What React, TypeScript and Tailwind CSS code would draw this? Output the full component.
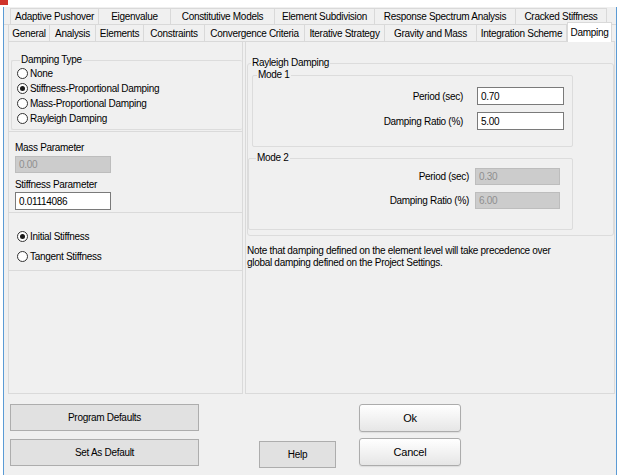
import React from "react";

const row1 = [
  ["Adaptive Pushover", 89],
  ["Eigenvalue", 73],
  ["Constitutive Models", 105],
  ["Element Subdivision", 101],
  ["Response Spectrum Analysis", 142],
  ["Cracked Stiffness", 92],
] as const;

const row2 = [
  ["General", 42],
  ["Analysis", 46],
  ["Elements", 48],
  ["Constraints", 61],
  ["Convergence Criteria", 100],
  ["Iterative Strategy", 80],
  ["Gravity and Mass", 92],
  ["Integration Scheme", 90],
] as const;

function Radio({ checked, label }: { checked?: boolean; label: string }) {
  return (
    <div className="flex items-center h-[15px]">
      <span className="w-[11px] h-[11px] rounded-full border border-[#333333] bg-white flex items-center justify-center shrink-0">
        {checked && <span className="w-[5px] h-[5px] rounded-full bg-[#1a1a1a]" />}
      </span>
      <span className="ml-[2px] leading-none">{label}</span>
    </div>
  );
}

function Field({ value, disabled, w }: { value: string; disabled?: boolean; w: string }) {
  return (
    <div
      className={
        disabled
          ? `${w} h-[17px] border border-[#bdbdbd] bg-[#cccccc] text-[#8f8f8f] flex items-center pl-[3px]`
          : `${w} h-[18px] border border-[#7a7a7a] bg-white text-black flex items-center pl-[3px]`
      }
    >
      {value}
    </div>
  );
}

export default function App() {
  return (
    <div className="w-[618px] h-[475px] bg-[#f0f0f0] flex flex-col overflow-hidden font-['Liberation_Sans',Arial,sans-serif] text-[10px] tracking-[-0.3px] text-black">
      {/* title strip */}
      <div className="h-[7px] bg-white flex shrink-0">
        <div className="w-[8px] h-[5px] bg-[#d0342c]" />
      </div>
      <div className="flex-1 flex min-h-0">
        <div className="w-[3px] bg-white" />
        <div className="w-[1px] bg-[#5b9bd5]" />
        <div className="flex-1 flex flex-col min-w-0">
          {/* tabs row 1 */}
          <div className="flex pl-[6px] mt-[1px] h-[16px]">
            {row1.map(([t, w]) => (
              <div
                key={t}
                style={{ width: w }}
                className="h-full border border-b-0 border-[#d9d9d9] -ml-px first:ml-0 bg-[#f0f0f0] flex items-center justify-center whitespace-nowrap"
              >
                {t}
              </div>
            ))}
          </div>
          {/* tabs row 2 */}
          <div className="flex items-end pl-[4px] h-[17px] border-t border-[#d9d9d9]">
            {row2.map(([t, w]) => (
              <div
                key={t}
                style={{ width: w }}
                className="h-full border-r border-[#d9d9d9] first:border-l bg-[#f0f0f0] flex items-center justify-center whitespace-nowrap"
              >
                {t}
              </div>
            ))}
            <div className="relative z-10 w-[45px] h-[20px] bg-white border border-b-0 border-[#d9d9d9] flex items-center justify-center -mb-px">
              Damping
            </div>
          </div>
          {/* page */}
          <div className="h-[353px] ml-[4px] mr-[1px] border-t border-[#d9d9d9] flex gap-[2px] shrink-0">
            {/* left column */}
            <div className="w-[235px] border border-t-0 border-[#dadada] flex flex-col">
              <div className="h-[90px] border-b border-[#dadada] pl-[2px] pt-[12px]">
                <fieldset className="h-[76px] border border-[#dcdcdc] border-r-0 rounded-[2px] pl-[5px]">
                  <legend className="ml-[3px] px-[1px] leading-[12px]">Damping Type</legend>
                  <Radio label="None" />
                  <Radio checked label="Stiffness-Proportional Damping" />
                  <Radio label="Mass-Proportional Damping" />
                  <Radio label="Rayleigh Damping" />
                </fieldset>
              </div>
              <div className="h-[81px] border-b border-[#dadada] pl-[6px] flex flex-col">
                <div className="mt-[10px] leading-[12px]">Mass Parameter</div>
                <div className="mt-[2px]">
                  <Field value="0.00" disabled w="w-[96px]" />
                </div>
                <div className="mt-[6px] leading-[12px]">Stiffness Parameter</div>
                <div className="mt-[1px]">
                  <Field value="0.01114086" w="w-[96px]" />
                </div>
              </div>
              <div className="h-[58px] border-b border-[#dadada] pl-[8px] pt-[16px] flex flex-col gap-[5px]">
                <Radio checked label="Initial Stiffness" />
                <Radio label="Tangent Stiffness" />
              </div>
            </div>
            {/* right column */}
            <div className="flex-1 border border-t-0 border-[#dadada] flex flex-col">
              <fieldset className="mt-[15px] ml-[1px] h-[179px] border border-[#dcdcdc] rounded-[3px] pb-[4px]">
                <legend className="ml-[3px] px-[1px] leading-[12px]">Rayleigh Damping</legend>
                <fieldset className="ml-[4px] w-[321px] h-[78px] border border-[#dcdcdc] rounded-[2px]">
                  <legend className="ml-[4px] px-[1px] leading-[12px]">Mode 1</legend>
                  <div className="flex flex-col gap-[7px] mt-[6px] pr-[8px]">
                    <div className="flex items-center justify-end gap-[14px]">
                      <span>Period (sec)</span>
                      <Field value="0.70" w="w-[87px]" />
                    </div>
                    <div className="flex items-center justify-end gap-[14px]">
                      <span>Damping Ratio (%)</span>
                      <Field value="5.00" w="w-[87px]" />
                    </div>
                  </div>
                </fieldset>
                <fieldset className="mt-[5px] w-[325px] h-[78px] border border-[#dcdcdc] rounded-[2px]">
                  <legend className="ml-[7px] px-[1px] leading-[12px]">Mode 2</legend>
                  <div className="flex flex-col gap-[7px] mt-[4px] pr-[12px]">
                    <div className="flex items-center justify-end gap-[6px]">
                      <span>Period (sec)</span>
                      <Field value="0.30" disabled w="w-[85px]" />
                    </div>
                    <div className="flex items-center justify-end gap-[6px]">
                      <span>Damping Ratio (%)</span>
                      <Field value="6.00" disabled w="w-[85px]" />
                    </div>
                  </div>
                </fieldset>
              </fieldset>
              <div className="mt-[9px] pl-[1px] leading-[12px]">
                Note that damping defined on the element level will take precedence over
                <br />
                global damping defined on the Project Settings.
              </div>
            </div>
          </div>
          {/* bottom buttons */}
          <div className="flex-1 flex pl-[6px] pt-[10px]">
            <div className="w-[189px] flex flex-col gap-[8px]">
              <button className="h-[27px] bg-[#e1e1e1] border border-[#adadad] tracking-[-0.3px]">Program Defaults</button>
              <button className="h-[27px] bg-[#e1e1e1] border border-[#adadad] tracking-[-0.3px]">Set As Default</button>
            </div>
            <div className="ml-[60px] flex flex-col justify-end pb-[7px]">
              <button className="w-[77px] h-[27px] bg-[#e1e1e1] border border-[#adadad] tracking-[-0.3px]">Help</button>
            </div>
            <div className="ml-[23px] flex flex-col gap-[6px]">
              <button className="w-[102px] h-[28px] rounded-[3px] border border-[#acacac] bg-gradient-to-b from-white to-[#e6e6e6] shadow-[0_1px_1px_rgba(0,0,0,0.08)] text-[11px] tracking-[-0.2px]">Ok</button>
              <button className="w-[102px] h-[28px] rounded-[3px] border border-[#acacac] bg-gradient-to-b from-white to-[#e6e6e6] shadow-[0_1px_1px_rgba(0,0,0,0.08)] text-[11px] tracking-[-0.2px]">Cancel</button>
            </div>
          </div>
        </div>
        <div className="w-[1px] bg-[#5b9bd5]" />
        <div className="w-[1px] bg-white" />
      </div>
    </div>
  );
}
